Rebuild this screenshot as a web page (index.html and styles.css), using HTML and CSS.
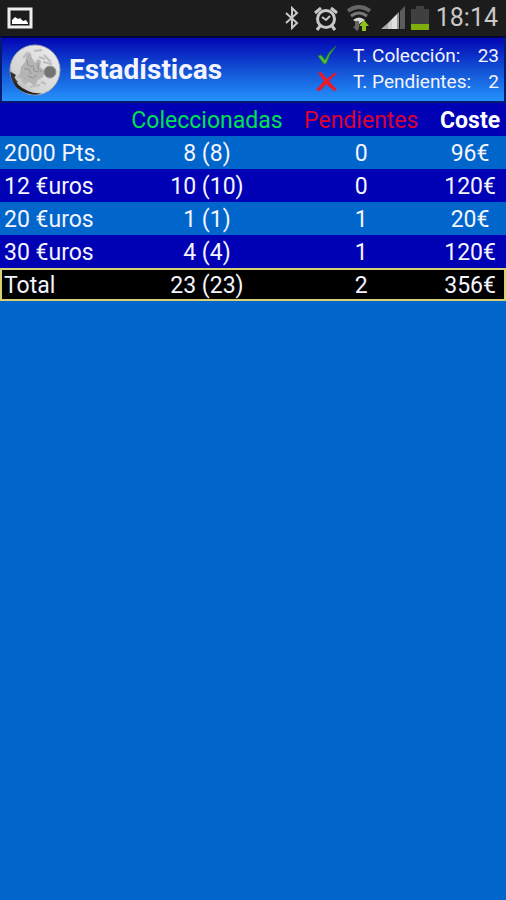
FILE: index.html
```html
<!DOCTYPE html>
<html lang="es">
<head>
<meta charset="utf-8">
<meta name="viewport" content="width=device-width, initial-scale=1">
<title>Estadísticas</title>
<link rel="stylesheet" href="styles.css">
</head>
<body>
<div class="status">
  <svg class="photo" width="26" height="22" viewBox="0 0 26 22" aria-hidden="true">
    <rect x="2" y="2" width="22" height="18" fill="#1c1c1c" stroke="#eee" stroke-width="3"/>
    <path d="M5 17v-4l3-3 3 2 2-1 3 3 3-1 2 3v1z" fill="#fff"/>
  </svg>
  <div class="indicators">
    <svg width="16" height="24" viewBox="0 0 16 24" fill="none" stroke="#c8c8c8" stroke-width="2" aria-hidden="true">
      <path d="M2 7l11 10-5 5V2l5 5L2 17"/>
    </svg>
    <svg class="alarm" width="26" height="26" viewBox="0 0 26 26" fill="none" stroke="#c8c8c8" aria-hidden="true">
      <circle cx="13" cy="14" r="8.5" stroke-width="3"/>
      <path d="M2 8l6-5M24 8l-6-5" stroke-width="3"/>
      <path d="M7 21l-3 4M19 21l3 4" stroke-width="3"/>
      <path d="M9 12l4 3 4-4" stroke-width="2"/>
    </svg>
    <svg class="wifi" width="26" height="28" viewBox="0 0 26 28" fill="none" aria-hidden="true">
      <path d="M2 7q11-8 22 0" stroke="#666" stroke-width="4"/>
      <path d="M5 12q8-6 16 0" stroke="#777" stroke-width="3"/>
      <path d="M7 16q6-5 12 0l-6 4z" fill="#d8d8d8"/>
      <path d="M9 17h4v8l-2 2-4-4 2-1z" fill="#666"/>
      <path d="M18 16l5 6h-3v5h-4v-5h-3z" fill="#8fc31a"/>
    </svg>
    <svg class="signal" width="26" height="24" viewBox="0 0 26 24" aria-hidden="true">
      <path d="M1 23l7-6v6z" fill="#aaa"/>
      <path d="M8 17l4-4v10H8z" fill="#ccc"/>
      <path d="M12 13l5-5v15h-5z" fill="#e0e0e0"/>
      <path d="M17 8l2-2v17h-2z" fill="#999"/>
      <path d="M20 5l5-5v23h-5z" fill="#5c5c5c"/>
    </svg>
    <svg class="battery" width="20" height="26" viewBox="0 0 20 26" aria-hidden="true">
      <path d="M6 1h8v3h5v21H1V4h5z" fill="#404040"/>
      <path d="M1 19h18v6H1z" fill="#80ae0a"/>
    </svg>
    <time class="clock">18:14</time>
  </div>
</div>
<header class="bar">
  <svg class="coin" width="54" height="54" viewBox="0 0 54 54" aria-hidden="true">
    <defs>
      <linearGradient id="metal" x1="0" y1="1" x2="1" y2="0">
        <stop offset="0" stop-color="#a0a0a0"/>
        <stop offset=".3" stop-color="#d4d4d4"/>
        <stop offset="1" stop-color="#eeeeee"/>
      </linearGradient>
    </defs>
    <circle cx="27" cy="27" r="25" fill="url(#metal)" stroke="#a4a8b4" stroke-width="1"/>
    <path d="M2 28Q4 48 22 51q6 2 12-1-8 1-14-2Q8 43 7 35l-2-2z" fill="#222"/>
    <path d="M3 29l5 3-2 3 4 4-3 1Q3 36 3 29z" fill="#333"/>
    <path d="M13 24l4-5 1-6 4-4 2 6 3 5 3-4 3 2-1 6 5 4-2 6-5 3-3 6-6-4-5 3-2-6-5-2 3-4z" fill="#b4b4b4"/>
    <path d="M19 17l1 5 4 2M16 26h5l2 5M25 22l1 6 5 1M30 20v6l4 3M20 33l5 2 4-3" fill="none" stroke="#929292" stroke-width="1"/>
    <path d="M15 15l5-6M31 14l6 2M36 12l7 7M22 44l10-2M13 37l5 3M26 8l8-1M35 19l9 2M33 39l5 2" fill="none" stroke="#bcbcbc" stroke-width="2"/>
    <circle cx="42" cy="29" r="6" fill="#747474" stroke="#999" stroke-width="1"/>
  </svg>
  <h1 class="title">Estadísticas</h1>
  <dl class="totals">
    <div class="total-line">
      <dt><svg width="24" height="24" viewBox="0 0 24 24" aria-hidden="true"><path d="M3 12l3-1 4 5Q14 7 21 2q-7 8-10 18H9z" fill="#4bc03c" stroke="#237b35" stroke-width="1"/></svg>T. Colección:</dt><dd>23</dd>
    </div>
    <div class="total-line">
      <dt><svg width="24" height="24" viewBox="0 0 24 24" aria-hidden="true"><path d="M3 3l3-1 6 7 7-6h3l-8 8 8 9-3 1-8-7-6 7-4-1 8-9z" fill="#f01824"/></svg>T. Pendientes:</dt><dd>2</dd>
    </div>
  </dl>
</header>
<main>
  <table class="stats">
    <colgroup><col class="c-name"><col class="c-got"><col class="c-left"><col class="c-cost"></colgroup>
    <thead>
      <tr><td></td><th class="got" scope="col">Coleccionadas</th><th class="left" scope="col">Pendientes</th><th class="cost" scope="col">Coste</th></tr>
    </thead>
    <tbody>
      <tr><th scope="row">2000 Pts.</th><td>8 (8)</td><td>0</td><td>96€</td></tr>
      <tr><th scope="row">12 €uros</th><td>10 (10)</td><td>0</td><td>120€</td></tr>
      <tr><th scope="row">20 €uros</th><td>1 (1)</td><td>1</td><td>20€</td></tr>
      <tr><th scope="row">30 €uros</th><td>4 (4)</td><td>1</td><td>120€</td></tr>
    </tbody>
    <tfoot>
      <tr><th scope="row">Total</th><td>23 (23)</td><td>2</td><td>356€</td></tr>
    </tfoot>
  </table>
</main>
</body>
</html>
```
FILE: styles.css
```css
* { box-sizing: border-box; }

body {
  margin: 0;
  min-height: 100vh;
  background: #0066cc;
  color: #f4f4ff;
  font-family: Roboto, "Liberation Sans", sans-serif;
}

svg { display: block; flex: none; }

.status {
  display: flex;
  align-items: center;
  justify-content: space-between;
  height: 36px;
  padding: 0 8px 0 7px;
  background: #1c1c1c;
}

.indicators { display: flex; align-items: center; }
.alarm { margin-left: 13px; }
.wifi { margin-left: 7px; }
.signal { margin-left: 8px; }
.battery { margin-left: 4px; }

.clock {
  margin-left: 6px;
  color: #c8c8c8;
  font-size: 25px;
  line-height: 36px;
}

.bar {
  display: flex;
  align-items: center;
  height: 67px;
  padding: 0 5px 0 6px;
  border: 2px solid #061a70;
  border-top-color: #02023c;
  background: linear-gradient(#0306b4, #1250d4 50%, #2492fc);
}

.title {
  flex: 1;
  margin: 0 0 0 7px;
  font-size: 28px;
  line-height: 32px;
}

.totals { margin: 0; width: 184px; padding-bottom: 2px; }

.total-line {
  display: flex;
  justify-content: space-between;
  font-size: 19px;
  line-height: 26px;
}

.total-line dt { display: flex; align-items: center; gap: 14px; }
.total-line dd { margin: 0; }

.stats {
  width: 100%;
  table-layout: fixed;
  border-collapse: collapse;
  font-size: 23px;
  line-height: 30px;
  text-align: center;
}

.c-name { width: 25%; }
.c-got { width: 32%; }
.c-left { width: 29%; }
.c-cost { width: 14%; }

.stats th, .stats td { height: 33px; padding: 3px 1px 0 0; font-weight: 400; }
.stats th[scope="row"] { padding-left: 4px; text-align: left; }
.stats thead tr, .stats tbody tr:nth-child(even) { background: #0000b4; }
.stats .got { color: #00e050; }
.stats .left { color: #dc0032; }
.stats .cost { color: #fff; font-weight: 700; }

.stats tfoot tr {
  background: #000;
  outline: 2px solid #d8d070;
  outline-offset: -2px;
}
```
